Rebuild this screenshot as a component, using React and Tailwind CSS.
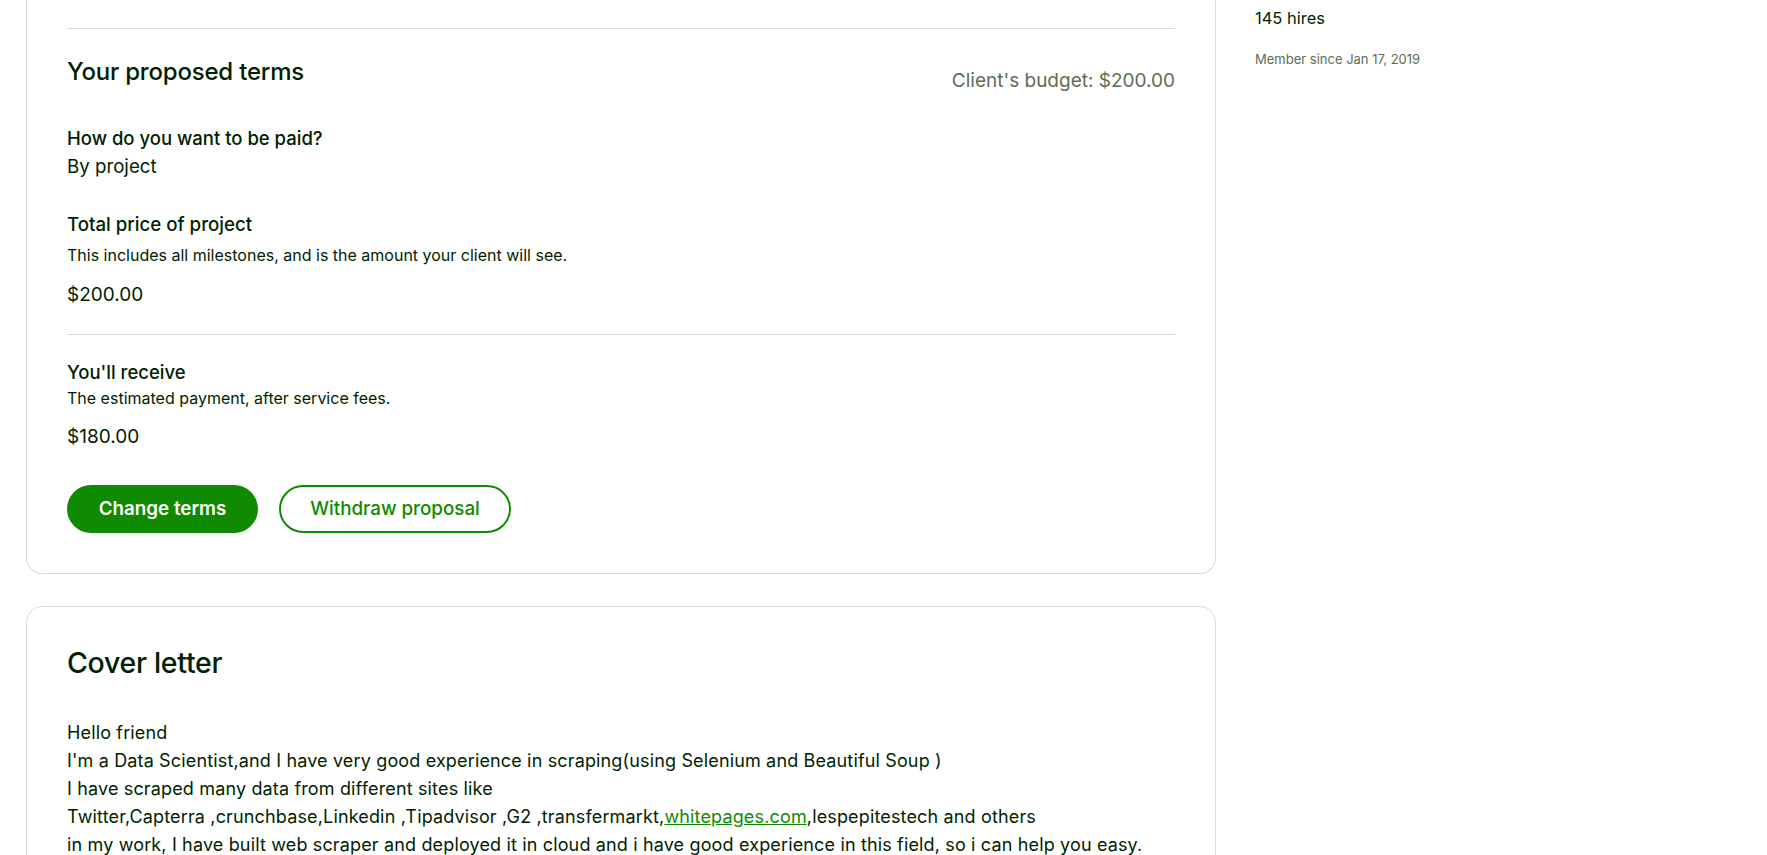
const font = { fontFamily: 'Inter, "Liberation Sans", sans-serif' }

function Divider({ className = '' }) {
  return <div className={`h-px bg-[#d5e0d5] ${className}`} />
}

function ProposedTerms() {
  return (
    <section className="w-[1190px] border border-t-0 border-[#d5e0d5] rounded-b-2xl px-10 pt-[28px] pb-10 bg-white">
      <Divider />
      <div className="flex justify-between items-start mt-[27px]">
        <h2 className="text-[24px] leading-[32px] font-medium tracking-[-0.2px]">Your proposed terms</h2>
        <span className="mt-[13px] text-[19px] leading-[24px] text-[#5e6d55]">Client's budget: $200.00</span>
      </div>

      <h3 className="mt-[31px] text-[18.5px] leading-[28px] font-medium">How do you want to be paid?</h3>
      <p className="mt-px text-[18.7px] leading-[28px]">By project</p>

      <h3 className="mt-[30px] text-[18.7px] leading-[28px] font-medium">Total price of project</h3>
      <p className="mt-[5px] text-[16px] leading-[22px]">This includes all milestones, and is the amount your client will see.</p>
      <p className="mt-[15px] text-[19px] leading-[28px]">$200.00</p>

      <Divider className="mt-[25px]" />

      <h3 className="mt-[23px] text-[18.5px] leading-[28px] font-medium">You'll receive</h3>
      <p className="mt-px text-[16px] leading-[22px]">The estimated payment, after service fees.</p>
      <p className="mt-[14px] text-[19px] leading-[28px]">$180.00</p>

      <div className="flex gap-[21px] mt-[34px]">
        <button className="h-12 w-[191px] rounded-full bg-[#108a00] text-white text-[18.8px] font-semibold">
          Change terms
        </button>
        <button className="h-12 w-[232px] rounded-full border-2 border-[#108a00] text-[#108a00] text-[18.8px] font-medium">
          Withdraw proposal
        </button>
      </div>
    </section>
  )
}

function CoverLetter() {
  return (
    <section className="w-[1190px] mt-8 border border-[#d5e0d5] rounded-2xl px-10 pt-[38px] pb-10 bg-white">
      <h2 className="text-[28.5px] leading-[36px] font-medium tracking-[-0.3px]">Cover letter</h2>
      <div className="mt-[38px] text-[18px] leading-[28px] tracking-[0.15px]">
        <p>Hello friend</p>
        <p>I'm a Data Scientist,and I have very good experience in scraping(using Selenium and Beautiful Soup )</p>
        <p>I have scraped many data from different sites like</p>
        <p>
          Twitter,Capterra ,crunchbase,Linkedin ,Tipadvisor ,G2 ,transfermarkt,
          <a className="text-[#108a00] underline">whitepages.com</a>,lespepitestech and others
        </p>
        <p>in my work, I have built web scraper and deployed it in cloud and i have good experience in this field, so i can help you easy.</p>
      </div>
    </section>
  )
}

export default function App() {
  return (
    <div className="h-[855px] overflow-hidden bg-white text-[#001e00] flex" style={font}>
      <main className="ml-[26px]">
        <ProposedTerms />
        <CoverLetter />
      </main>
      <aside className="pl-[39px] pt-[6px]">
        <p className="text-[16.5px] leading-[24px]">145 hires</p>
        <p className="mt-[19px] text-[13px] leading-[20px] text-[#5e6d55]">Member since Jan 17, 2019</p>
      </aside>
    </div>
  )
}
